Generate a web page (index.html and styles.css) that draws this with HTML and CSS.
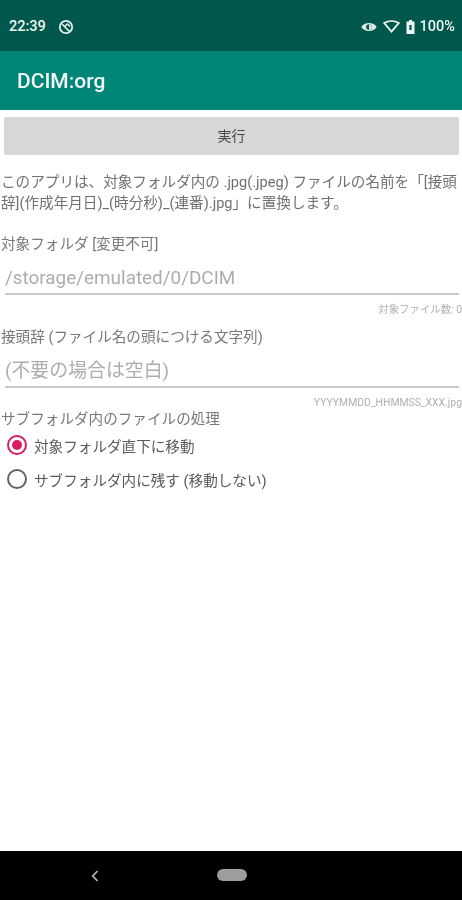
FILE: index.html
```html
<!DOCTYPE html>
<html lang="ja">
  <head>
    <meta charset="UTF-8" />
    <title>DCIM:org</title>
    <link rel="stylesheet" href="styles.css">
  </head>
  <body>
    <div class="phone">
      <div class="status-bar">
        <div class="status-left">
          <span class="clock">22:39</span>
          <svg class="sync-icon" width="16" height="16" viewBox="0 0 16 16">
            <circle cx="8" cy="8" r="6.2" fill="none" stroke="#e6efec" stroke-width="1.8"/>
            <path d="M4 5 L11.5 12.5 M6.5 7.5 L9.5 5 L12 7.5" fill="none" stroke="#e6efec" stroke-width="1.6"/>
          </svg>
        </div>
        <div class="status-right">
          <svg width="16" height="12" viewBox="0 0 16 12">
            <path d="M0.3 6 C3 0.8 13 0.8 15.7 6 C13 11.2 3 11.2 0.3 6 Z" fill="#dfe9e6"/>
            <circle cx="8" cy="6" r="2.8" fill="#00574b"/>
            <path d="M8 3.2 A2.8 2.8 0 0 1 8 8.8 Z" fill="#dfe9e6"/>
          </svg>
          <svg width="17" height="13" viewBox="0 0 17 13">
            <path d="M1.2 3 C5.5 0.4 11.5 0.4 15.8 3 L8.5 11.5 Z" fill="none" stroke="#eef4f2" stroke-width="1.8"/>
          </svg>
          <svg width="9" height="14" viewBox="0 0 9 14">
            <path d="M3 0 H6 V1.5 H8.5 V14 H0.5 V1.5 H3 Z" fill="#eef4f2"/>
            <rect x="3.4" y="5" width="2.2" height="5" fill="#00574b"/>
          </svg>
          <span class="battery">100%</span>
        </div>
      </div>
      <header class="app-bar">DCIM:org</header>
      <main class="content">
        <button class="run-button">実行</button>
        <p class="description">このアプリは、対象フォルダ内の .jpg(.jpeg) ファイルの名前を「[接頭辞](作成年月日)_(時分秒)_(連番).jpg」に置換します。</p>

        <div class="field-label folder-label">対象フォルダ [変更不可]</div>
        <div class="text-input folder-input">/storage/emulated/0/DCIM</div>
        <div class="hint">対象ファイル数: 0</div>

        <div class="field-label prefix-label">接頭辞 (ファイル名の頭につける文字列)</div>
        <div class="text-input prefix-input">(不要の場合は空白)</div>
        <div class="hint">YYYYMMDD_HHMMSS_XXX.jpg</div>

        <div class="field-label sub-label">サブフォルダ内のファイルの処理</div>
        <div class="radio-row">
          <span class="radio checked"></span>
          <span>対象フォルダ直下に移動</span>
        </div>
        <div class="radio-row">
          <span class="radio"></span>
          <span>サブフォルダ内に残す (移動しない)</span>
        </div>
      </main>
      <footer class="nav-bar">
        <svg class="nav-back" width="8" height="12" viewBox="0 0 8 12">
          <path d="M6.5 1 L1.8 6 L6.5 11" fill="none" stroke="#b4b4b4" stroke-width="1.8"/>
        </svg>
        <span class="nav-home"></span>
      </footer>
    </div>
  </body>
</html>
```

FILE: styles.css
```css
html, body {
  margin: 0;
  padding: 0;
  background-color: #fff;
}
.phone {
  width: 462px;
  height: 900px;
  display: flex;
  flex-direction: column;
  overflow: hidden;
  font-family: Roboto, "Noto Sans CJK JP", sans-serif;
  filter: blur(0.5px);
}
.status-bar {
  height: 51px;
  flex-shrink: 0;
  background-color: #00574b;
  color: #eef4f2;
  display: flex;
  align-items: center;
  justify-content: space-between;
  padding: 2px 7px 0 9px;
  box-sizing: border-box;
}
.status-left, .status-right {
  display: flex;
  align-items: center;
}
.clock {
  font-size: 14.5px;
  font-weight: 500;
}
.sync-icon {
  margin-left: 12px;
}
.status-right {
  gap: 6px;
}
.battery {
  font-size: 14.5px;
  font-weight: 500;
  margin-left: -1px;
}
.app-bar {
  height: 59px;
  flex-shrink: 0;
  background-color: #008577;
  color: #f2f8f7;
  font-size: 21px;
  font-weight: 500;
  line-height: 61px;
  padding-left: 17px;
}
.content {
  flex: 1;
  padding-top: 7px;
}
.run-button {
  display: block;
  width: 455px;
  height: 38px;
  margin: 0 0 0 4px;
  border: none;
  border-radius: 2px;
  background-color: #d6d7d7;
  color: #4a4a4a;
  font-family: inherit;
  font-size: 14px;
  padding: 0 0 2px;
}
.description {
  margin: 17px 0 0 1px;
  width: 461px;
  font-size: 14.6px;
  line-height: 21px;
  color: #707070;
}
.field-label {
  font-size: 14.6px;
  line-height: 18px;
  color: #787878;
  padding-left: 1px;
  white-space: nowrap;
}
.folder-label {
  margin-top: 21px;
}
.prefix-label {
  margin-top: 11px;
}
.text-input {
  height: 30px;
  margin: 0 3px 0 5px;
  border-bottom: 2px solid #c9c9c9;
  font-size: 18.9px;
  line-height: 30px;
  color: #adadad;
}
.folder-input {
  margin-top: 10px;
}
.prefix-input {
  margin-top: 10px;
}
.hint {
  font-size: 10.4px;
  line-height: 14px;
  margin-top: 8px;
  text-align: right;
  color: #b0b0b0;
  white-space: nowrap;
}
.radio-row {
  height: 34px;
  display: flex;
  align-items: center;
  gap: 7px;
  padding-left: 7px;
  font-size: 14.6px;
  color: #5a5a5a;
  white-space: nowrap;
}
.radio {
  width: 20px;
  height: 20px;
  box-sizing: border-box;
  border: 2px solid #636363;
  border-radius: 50%;
  display: flex;
  align-items: center;
  justify-content: center;
}
.radio.checked {
  border-color: #d81b60;
}
.radio.checked::after {
  content: "";
  width: 10px;
  height: 10px;
  border-radius: 50%;
  background-color: #d81b60;
}
.nav-bar {
  height: 49px;
  flex-shrink: 0;
  background-color: #000;
  position: relative;
}
.nav-back {
  position: absolute;
  left: 91px;
  top: 19px;
}
.nav-home {
  position: absolute;
  left: 217px;
  top: 18px;
  width: 30px;
  height: 12px;
  border-radius: 6px;
  background-color: #9d9d9d;
}
```
